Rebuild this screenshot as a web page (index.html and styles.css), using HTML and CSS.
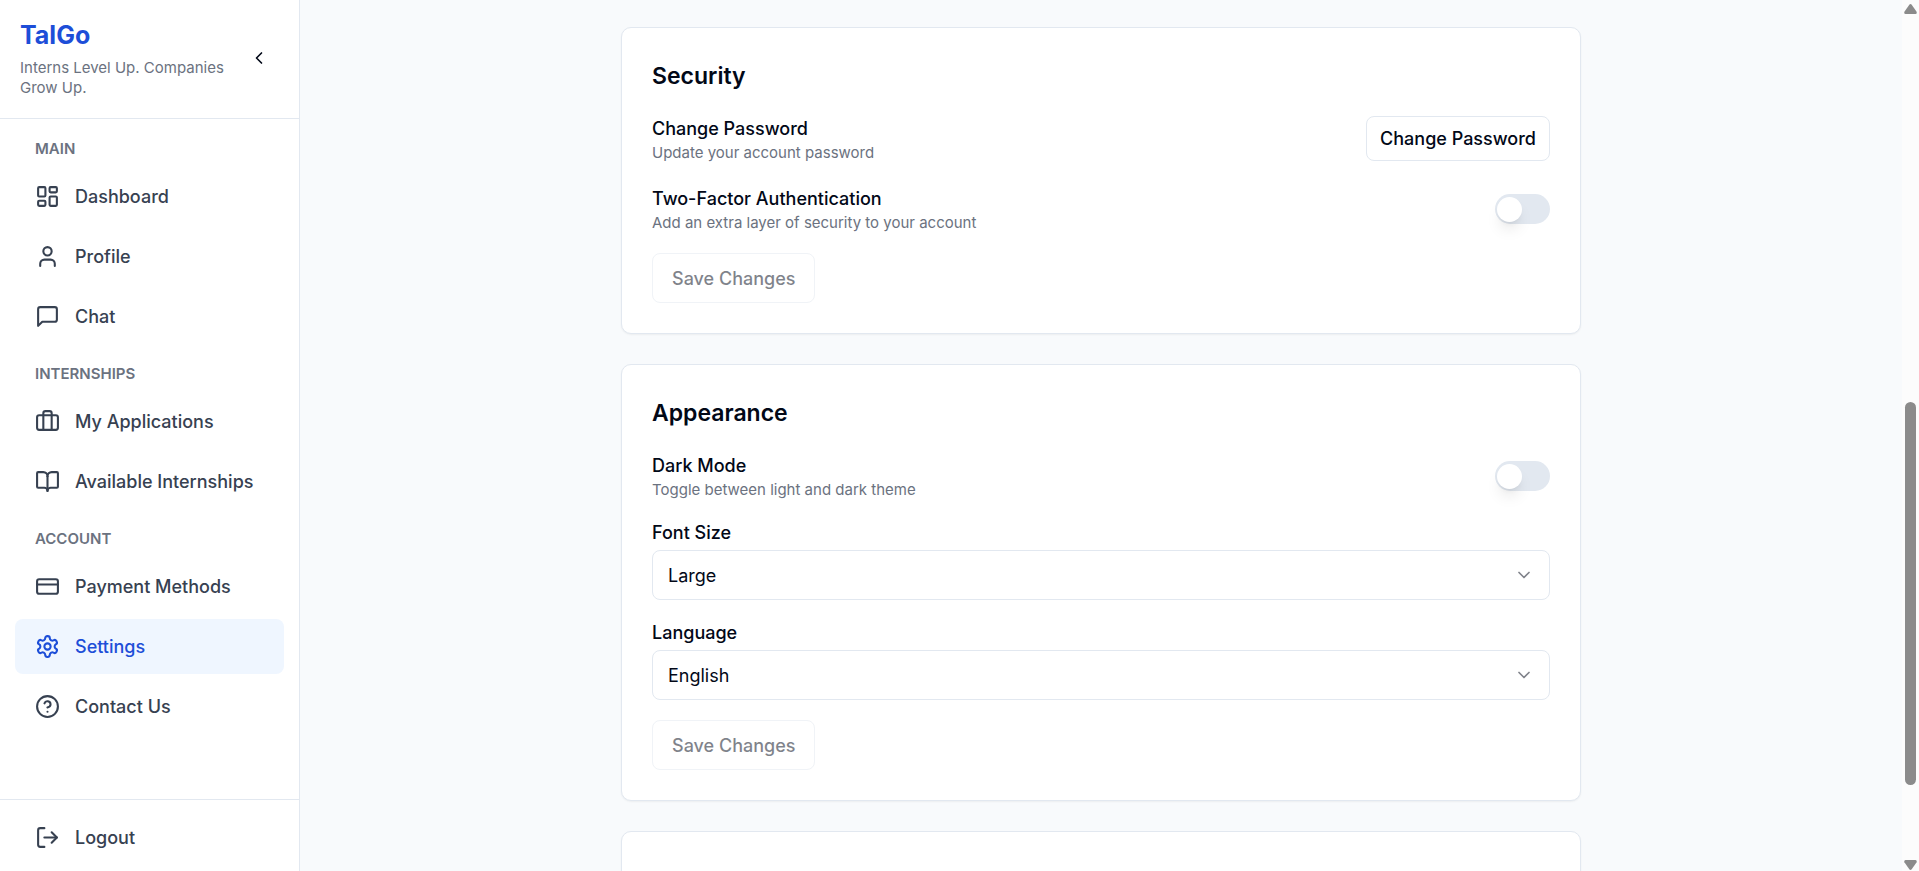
FILE: index.html
```html
<!DOCTYPE html>
<html lang="en">
<head>
<meta charset="utf-8">
<meta name="viewport" content="width=device-width, initial-scale=1">
<title>TalGo – Settings</title>
<link rel="stylesheet" href="styles.css">
</head>
<body class="app">
<aside class="sidebar">
  <header class="brand">
    <div class="brand-text">
      <h1 class="brand-name">TalGo</h1>
      <p class="brand-tagline">Interns Level Up. Companies Grow Up.</p>
    </div>
    <button class="collapse" type="button" aria-label="Collapse sidebar">
      <svg class="icon icon-small" viewBox="0 0 24 24"><path d="m15 18-6-6 6-6"/></svg>
    </button>
  </header>
  <nav class="nav">
    <h2 class="nav-title">MAIN</h2>
    <div class="nav-group">
      <a class="nav-item" href="#dashboard">
        <svg class="icon" viewBox="0 0 24 24"><rect width="7" height="9" x="3" y="3" rx="1"/><rect width="7" height="5" x="14" y="3" rx="1"/><rect width="7" height="9" x="14" y="12" rx="1"/><rect width="7" height="5" x="3" y="16" rx="1"/></svg>
        <span>Dashboard</span>
      </a>
      <a class="nav-item" href="#profile">
        <svg class="icon" viewBox="0 0 24 24"><path d="M19 21v-2a4 4 0 0 0-4-4H9a4 4 0 0 0-4 4v2"/><circle cx="12" cy="7" r="4"/></svg>
        <span>Profile</span>
      </a>
      <a class="nav-item" href="#chat">
        <svg class="icon" viewBox="0 0 24 24"><path d="M21 15a2 2 0 0 1-2 2H7l-4 4V5a2 2 0 0 1 2-2h14a2 2 0 0 1 2 2z"/></svg>
        <span>Chat</span>
      </a>
    </div>
    <h2 class="nav-title">INTERNSHIPS</h2>
    <div class="nav-group">
      <a class="nav-item" href="#applications">
        <svg class="icon" viewBox="0 0 24 24"><path d="M16 20V4a2 2 0 0 0-2-2h-4a2 2 0 0 0-2 2v16"/><rect width="20" height="14" x="2" y="6" rx="2"/></svg>
        <span>My Applications</span>
      </a>
      <a class="nav-item" href="#internships">
        <svg class="icon" viewBox="0 0 24 24"><path d="M12 7v14"/><path d="M3 18a1 1 0 0 1-1-1V4a1 1 0 0 1 1-1h5a4 4 0 0 1 4 4 4 4 0 0 1 4-4h5a1 1 0 0 1 1 1v13a1 1 0 0 1-1 1h-6a3 3 0 0 0-3 3 3 3 0 0 0-3-3z"/></svg>
        <span>Available Internships</span>
      </a>
    </div>
    <h2 class="nav-title">ACCOUNT</h2>
    <div class="nav-group">
      <a class="nav-item" href="#payment">
        <svg class="icon" viewBox="0 0 24 24"><rect width="20" height="14" x="2" y="5" rx="2"/><path d="M2 10h20"/></svg>
        <span>Payment Methods</span>
      </a>
      <a class="nav-item nav-item-active" href="#settings" aria-current="page">
        <svg class="icon" viewBox="0 0 24 24"><path d="M12.22 2h-.44a2 2 0 0 0-2 2v.18a2 2 0 0 1-1 1.73l-.43.25a2 2 0 0 1-2 0l-.15-.08a2 2 0 0 0-2.73.73l-.22.38a2 2 0 0 0 .73 2.73l.15.1a2 2 0 0 1 1 1.72v.51a2 2 0 0 1-1 1.74l-.15.09a2 2 0 0 0-.73 2.73l.22.38a2 2 0 0 0 2.73.73l.15-.08a2 2 0 0 1 2 0l.43.25a2 2 0 0 1 1 1.73V20a2 2 0 0 0 2 2h.44a2 2 0 0 0 2-2v-.18a2 2 0 0 1 1-1.73l.43-.25a2 2 0 0 1 2 0l.15.08a2 2 0 0 0 2.73-.73l.22-.39a2 2 0 0 0-.73-2.73l-.15-.08a2 2 0 0 1-1-1.74v-.5a2 2 0 0 1 1-1.74l.15-.09a2 2 0 0 0 .73-2.73l-.22-.38a2 2 0 0 0-2.73-.73l-.15.08a2 2 0 0 1-2 0l-.43-.25a2 2 0 0 1-1-1.73V4a2 2 0 0 0-2-2z"/><circle cx="12" cy="12" r="3"/></svg>
        <span>Settings</span>
      </a>
      <a class="nav-item" href="#contact">
        <svg class="icon" viewBox="0 0 24 24"><circle cx="12" cy="12" r="10"/><path d="M9.09 9a3 3 0 0 1 5.83 1c0 2-3 3-3 3"/><path d="M12 17h.01"/></svg>
        <span>Contact Us</span>
      </a>
    </div>
  </nav>
  <footer class="sidebar-footer">
    <button class="nav-item" type="button">
      <svg class="icon" viewBox="0 0 24 24"><path d="M9 21H5a2 2 0 0 1-2-2V5a2 2 0 0 1 2-2h4"/><path d="m16 17 5-5-5-5"/><path d="M21 12H9"/></svg>
      <span>Logout</span>
    </button>
  </footer>
</aside>

<main class="main">
  <div class="cards">
    <section class="card">
      <h2 class="card-title">Security</h2>
      <div class="rows">
        <div class="row">
          <div>
            <h3 class="label">Change Password</h3>
            <p class="hint">Update your account password</p>
          </div>
          <button class="button" type="button">Change Password</button>
        </div>
        <div class="row">
          <div>
            <label class="label" for="two-factor">Two-Factor Authentication</label>
            <p class="hint">Add an extra layer of security to your account</p>
          </div>
          <input class="switch" type="checkbox" role="switch" id="two-factor">
        </div>
      </div>
      <button class="button button-large" type="button" disabled>Save Changes</button>
    </section>

    <section class="card">
      <h2 class="card-title">Appearance</h2>
      <div class="rows">
        <div class="row">
          <div>
            <label class="label" for="dark-mode">Dark Mode</label>
            <p class="hint">Toggle between light and dark theme</p>
          </div>
          <input class="switch" type="checkbox" role="switch" id="dark-mode">
        </div>
      </div>
      <div class="field">
        <label class="label" for="font-size">Font Size</label>
        <div class="select-wrap">
          <select class="select" id="font-size">
            <option>Small</option>
            <option>Medium</option>
            <option selected>Large</option>
          </select>
          <svg class="icon icon-small select-arrow" viewBox="0 0 24 24"><path d="m6 9 6 6 6-6"/></svg>
        </div>
      </div>
      <div class="field">
        <label class="label" for="language">Language</label>
        <div class="select-wrap">
          <select class="select" id="language">
            <option selected>English</option>
          </select>
          <svg class="icon icon-small select-arrow" viewBox="0 0 24 24"><path d="m6 9 6 6 6-6"/></svg>
        </div>
      </div>
      <button class="button button-large" type="button" disabled>Save Changes</button>
    </section>

    <section class="card card-next"></section>
  </div>
</main>

<div class="scrollbar" aria-hidden="true">
  <svg class="scroll-arrow" viewBox="0 0 13 10"><path d="M5.300.8Q6.500-.6 7.700.8L12.600 7.800Q13.200 9.800 11.500 10H1.500Q-.2 9.800.4 7.800Z"/></svg>
  <div class="scroll-track">
    <div class="scroll-thumb"></div>
  </div>
  <svg class="scroll-arrow scroll-arrow-down" viewBox="0 0 13 10"><path d="M5.300.8Q6.500-.6 7.700.8L12.600 7.800Q13.200 9.800 11.500 10H1.500Q-.2 9.800.4 7.800Z"/></svg>
</div>
</body>
</html>
```

FILE: styles.css
```css
*,
*::before {
  box-sizing: border-box;
}

h1, h2, h3, p {
  margin: 0;
}

button, select {
  font: inherit;
  color: inherit;
}

.app {
  display: flex;
  height: 100vh;
  margin: 0;
  overflow: hidden;
  background: #f8fafc;
  color: #020817;
  font-family: Inter, "Liberation Sans", sans-serif;
  font-size: 18px;
  line-height: 26px;
}

.icon {
  flex: none;
  width: 25px;
  height: 25px;
  fill: none;
  stroke: currentColor;
  stroke-width: 2;
  stroke-linecap: round;
  stroke-linejoin: round;
}

.icon-small {
  width: 20px;
  height: 20px;
}

/* Sidebar */

.sidebar {
  display: flex;
  flex: none;
  flex-direction: column;
  width: 300px;
  border-right: 1px solid #e2e8f0;
  background: #fff;
}

.brand {
  display: flex;
  align-items: center;
  justify-content: space-between;
  padding: 18px 20px 20px;
  border-bottom: 1px solid #e2e8f0;
}

.brand-text {
  flex: 1;
}

.brand-name {
  margin-bottom: 5px;
  color: #1d4ed8;
  font-size: 25px;
  font-weight: 700;
  line-height: 35px;
}

.brand-tagline {
  color: #6b7280;
  font-size: 15px;
  line-height: 20px;
}

.collapse {
  display: flex;
  padding: 10px;
  border: 0;
  background: none;
}

.nav {
  flex: 1;
  padding: 0 15px;
}

.nav-title {
  padding: 20px 20px 10px;
  color: #6b7280;
  font-size: 15px;
  font-weight: 600;
  line-height: 20px;
}

.nav-group {
  display: grid;
  gap: 5px;
}

.nav-item {
  display: flex;
  align-items: center;
  gap: 15px;
  width: 100%;
  height: 55px;
  padding: 0 20px;
  border: 0;
  border-radius: 8px;
  background: none;
  color: #374151;
  font-weight: 500;
  text-decoration: none;
}

.nav-item-active {
  background: #eff6ff;
  color: #1d4ed8;
}

.sidebar-footer {
  padding: 10px 15px 6px;
  border-top: 1px solid #e2e8f0;
}

/* Settings cards */

.main {
  flex: 1;
  padding-top: 27px;
  overflow: hidden;
}

.cards {
  display: grid;
  gap: 30px;
  max-width: 960px;
  margin: 0 auto;
}

.card {
  padding: 30px;
  border: 1px solid #e2e8f0;
  border-radius: 10px;
  background: #fff;
  box-shadow: 0 1px 2px rgba(0, 0, 0, 0.05);
}

.card-next {
  min-height: 300px;
}

.card-title {
  margin-bottom: 22px;
  font-size: 23px;
  font-weight: 600;
  line-height: 36px;
}

.rows {
  display: grid;
  gap: 25px;
  margin-bottom: 22px;
}

.row {
  display: flex;
  align-items: center;
  justify-content: space-between;
}

.label {
  display: block;
  font-size: inherit;
  font-weight: 500;
}

.hint {
  margin-top: 3px;
  color: #6b7280;
  font-size: 15px;
  line-height: 16px;
}

.button {
  height: 45px;
  padding: 1px 13px 0;
  border: 1px solid #e2e8f0;
  border-radius: 8px;
  background: #fff;
  font-weight: 500;
}

.button-large {
  display: block;
  height: 50px;
  padding: 2px 19px 0;
}

.button:disabled {
  opacity: 0.5;
}

.switch {
  flex: none;
  width: 55px;
  height: 30px;
  margin: 0;
  padding: 2px;
  appearance: none;
  border-radius: 15px;
  background: #e2e8f0;
}

.switch::before {
  display: block;
  width: 25px;
  height: 25px;
  margin-top: 1px;
  border-radius: 50%;
  background: #fff;
  box-shadow: 0 10px 15px -3px rgba(0, 0, 0, 0.1), 0 4px 6px -4px rgba(0, 0, 0, 0.1);
  content: "";
}

.switch:checked {
  background: #1d4ed8;
}

.switch:checked::before {
  margin-left: 26px;
}

.field {
  display: grid;
  gap: 4px;
  margin-bottom: 20px;
}

.select-wrap {
  display: grid;
  align-items: center;
}

.select {
  grid-area: 1 / 1;
  width: 100%;
  height: 50px;
  padding: 2px 50px 0 15px;
  appearance: none;
  border: 1px solid #e2e8f0;
  border-radius: 8px;
  background: #fff;
}

.select-arrow {
  grid-area: 1 / 1;
  justify-self: end;
  margin-right: 16px;
  opacity: 0.5;
  pointer-events: none;
}

/* Page scroll bar */

.scrollbar {
  display: flex;
  flex: none;
  flex-direction: column;
  align-items: center;
  width: 17px;
  padding: 4px 0 1px;
  background: #fcfcfc;
}

.scroll-arrow {
  width: 13px;
  height: 10px;
  fill: #8b8b8b;
}

.scroll-arrow-down {
  transform: rotate(180deg);
}

.scroll-track {
  display: flex;
  flex: 1;
  flex-direction: column;
}

.scroll-track::before {
  flex: 388;
  content: "";
}

.scroll-track::after {
  flex: 75;
  content: "";
}

.scroll-thumb {
  flex: 383;
  width: 11px;
  border-radius: 6px;
  background: #8b8b8b;
}
```
